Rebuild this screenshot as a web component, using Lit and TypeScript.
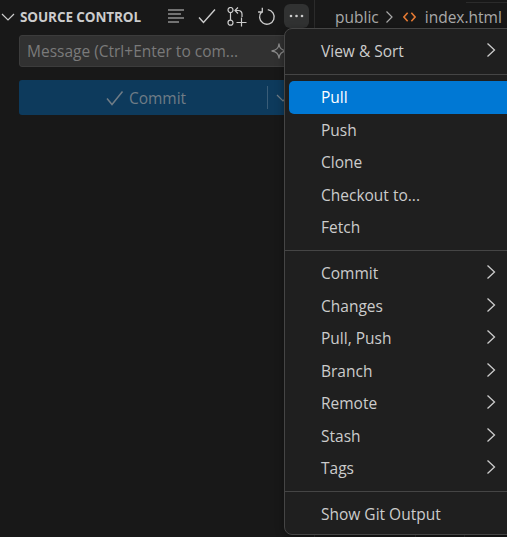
import { LitElement, html, css } from "lit";
import { customElement } from "lit/decorators.js";

const chevron = html`<svg class="chev" viewBox="0 0 10 16" width="10" height="16"><path d="M1.500 1.500 8.500 8 1.500 14.500" fill="none" stroke="#cccccc" stroke-width="1.300"/></svg>`;

type Item = { label: string; sub?: boolean; active?: boolean };
const groups: Item[][] = [
  [{ label: "View & Sort", sub: true }],
  [{ label: "Pull", active: true }, { label: "Push" }, { label: "Clone" }, { label: "Checkout to..." }, { label: "Fetch" }],
  [
    { label: "Commit", sub: true }, { label: "Changes", sub: true }, { label: "Pull, Push", sub: true },
    { label: "Branch", sub: true }, { label: "Remote", sub: true }, { label: "Stash", sub: true }, { label: "Tags", sub: true },
  ],
  [{ label: "Show Git Output" }],
];

@customElement("app-root")
export class AppRoot extends LitElement {
  static styles = css`
    :host { display: block; position: relative; width: 507px; height: 537px; overflow: hidden; background: #181818; font-family: "Open Sans", "Noto Sans", sans-serif; color: #ccc; }
    .page { display: flex; height: 537px; }
    .side { width: 314px; flex: none; border-right: 1px solid #2b2b2b; display: flex; flex-direction: column; }
    .head { height: 34px; display: flex; align-items: center; padding-left: 1px; }
    .title { font-size: 13.5px; font-weight: 700; color: #ccc; margin-left: 5px; letter-spacing: -0.1px; width: 146px; white-space: nowrap; }
    .tools { display: flex; align-items: center; gap: 10.5px; }
    .tool { width: 20px; height: 20px; display: flex; align-items: center; justify-content: center; }
    .tool.refresh { margin-left: -1.5px; }
    .tool.more { width: 25px; height: 24px; border-radius: 6px; background: #313232; margin-left: -2.5px; margin-top: -2px; }
    .input { margin: 1px 0 0 19px; width: 290px; height: 32px; background: #313131; border: 1px solid #3c3c3c; border-radius: 3px; box-sizing: border-box; display: flex; align-items: center; padding-left: 7px; font-size: 15.5px; color: #7a7a7a; white-space: nowrap; }
    .spark { margin-left: 32px; flex: none; }
    .commit { margin: 13px 0 0 19px; width: 290px; height: 35px; background: #0d3a5c; border-radius: 3px; display: flex; align-items: center; font-size: 15.5px; color: #6f7c86; }
    .commit-main { width: 248px; box-sizing: border-box; padding-left: 6px; display: flex; align-items: center; justify-content: center; gap: 5px; }
    .commit-sep { width: 1px; height: 23px; background: #3a5d78; }
    .commit-drop { margin-left: 8px; }
    .editor { flex: 1; position: relative; }
    .tab-line { position: absolute; left: 151px; right: 0; top: 2px; height: 1px; background: #2b2b2b; }
    .tick { position: absolute; bottom: 0; width: 1px; height: 2px; background: #2b2b2b; }
    .tick.a { left: 100px; }
    .tick.b { left: 149px; }
    .crumbs { display: flex; align-items: center; height: 34px; padding-left: 20px; font-size: 15.5px; color: #a9a9a9; white-space: nowrap; }
    .crumbs .sepc { margin: 0 9px 0 6px; flex: none; }
    .crumbs .code { margin: 0 9px 0 0; flex: none; }
    .menu { position: absolute; left: 284px; top: 28px; width: 240px; height: 507px; box-sizing: border-box; background: #1f1f1f; border: 1px solid #454545; border-radius: 8px; padding: 6px 0 0 4px; font-size: 15.5px; color: #ccc; box-shadow: 0 2px 8px rgba(0,0,0,.36); }
    .row { height: 32.5px; display: flex; align-items: center; padding-left: 32px; border-radius: 5px; position: relative; white-space: nowrap; }
    .row.active { background: #0078d4; color: #fff; }
    .chev { position: absolute; left: 197px; top: 7px; }
    .sep { height: 1px; background: #454545; margin: 6.25px 0 6.25px -4px; }
  `;

  render() {
    return html`
      <div class="page">
        <div class="side">
          <div class="head">
            <svg width="14" height="14" viewBox="0 0 14 14"><path d="M1 4 7 10 13 4" fill="none" stroke="#ccc" stroke-width="1.200"/></svg>
            <span class="title">SOURCE CONTROL</span>
            <div class="tools">
              <span class="tool"><svg width="20" height="20" viewBox="0 0 20 20" fill="none" stroke="#ccc" stroke-width="1.200"><path d="M2 3h16M2 7h13M2 11h16M2 15h11"/></svg></span>
              <span class="tool"><svg width="20" height="20" viewBox="0 0 20 20" fill="none" stroke="#ccc" stroke-width="1.400"><path d="M2 10.500 6.500 15.500 18 2.500"/></svg></span>
              <span class="tool"><svg width="20" height="20" viewBox="0 0 20 20" fill="none" stroke="#ccc" stroke-width="1.200"><circle cx="3.500" cy="3" r="2.500"/><circle cx="3.500" cy="15.700" r="2.500"/><path d="M3.500 5.500v7.700M11 0.500 8 3.500 11 6.500M8 3.500h3.500a3.500 3.500 0 0 1 3.500 3.500v3M9.500 15.500h10M14.500 10.500v9"/></svg></span>
              <span class="tool refresh"><svg width="20" height="20" viewBox="0 0 20 20" fill="none" stroke="#ccc" stroke-width="1.300"><path d="M5.800 4.700A7.300 7.300 0 1 0 11.800 2.700M6.300 0.800V5H2.100"/></svg></span>
              <span class="tool more"><svg width="15" height="4" viewBox="0 0 15 4" fill="#ccc"><circle cx="2" cy="2" r="1.300"/><circle cx="7.500" cy="2" r="1.300"/><circle cx="13" cy="2" r="1.300"/></svg></span>
            </div>
          </div>
          <div class="input">Message (Ctrl+Enter to com...<svg class="spark" width="18" height="18" viewBox="0 0 18 18" fill="none" stroke="#8a8a8a" stroke-width="1.400" stroke-linejoin="round"><path d="M9 2C9.500 6.300 11.200 8 16 9 11.200 10 9.500 11.700 9 16 8.500 11.700 6.800 10 2 9 6.800 8 8.500 6.300 9 2Z"/></svg></div>
          <div class="commit">
            <div class="commit-main"><svg width="18" height="16" viewBox="0 0 18 16" fill="none" stroke="#6f7c86" stroke-width="1.500"><path d="M1 8.500 6 14.500 16.500 1.500"/></svg>Commit</div>
            <span class="commit-sep"></span>
            <svg class="commit-drop" width="14" height="14" viewBox="0 0 14 14"><path d="M1 4 7 10 13 4" fill="none" stroke="#6f7c86" stroke-width="1.200"/></svg>
          </div>
        </div>
        <div class="editor">
          <div class="tab-line"></div>
          <div class="crumbs">public<svg class="sepc" width="9" height="14" viewBox="0 0 9 14"><path d="M1.500 1.500 7 7 1.500 12.500" fill="none" stroke="#a9a9a9" stroke-width="1.200"/></svg><svg class="code" width="13" height="12" viewBox="0 0 14 12" fill="none" stroke="#e37933" stroke-width="1.700"><path d="M5 1.500 1 6 5 10.500M9 1.500 13 6 9 10.500"/></svg>index.html</div>
          <span class="tick a"></span><span class="tick b"></span>
        </div>
      </div>
      <div class="menu">
        ${groups.map((g, i) => html`
          ${i ? html`<div class="sep"></div>` : ""}
          ${g.map((it) => html`<div class="row ${it.active ? "active" : ""}">${it.label}${it.sub ? chevron : ""}</div>`)}
        `)}
      </div>
    `;
  }
}
